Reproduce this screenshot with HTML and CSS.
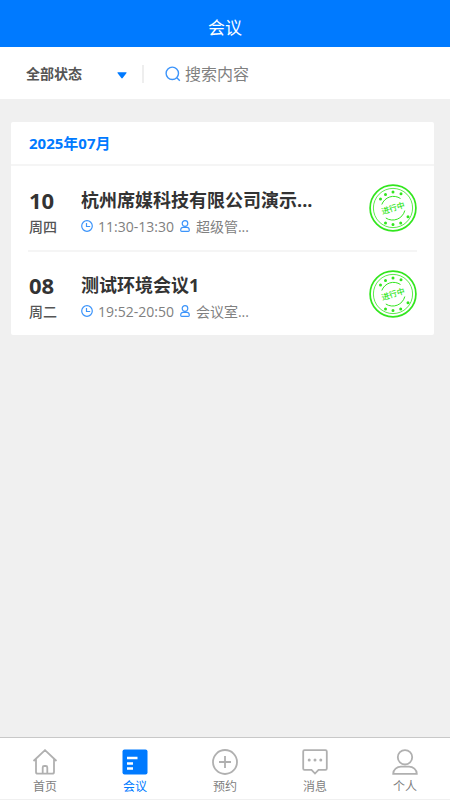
FILE: index.html
```html
<!DOCTYPE html>
<html lang="zh-CN">
<head>
    <meta charset="UTF-8">
    <meta name="viewport" content="width=device-width, initial-scale=1.0">
    <title>会议</title>
    <link rel="stylesheet" href="styles.css">
</head>
<body>
    <!-- shared icons -->
    <svg class="sprite" aria-hidden="true">
        <symbol id="clock" viewBox="0 0 12 12">
            <circle cx="6" cy="6" r="5.3"/>
            <path d="M5.500 3v3.500h3.700"/>
        </symbol>
        <symbol id="person" viewBox="0 0 12 12">
            <circle cx="6" cy="3.500" r="2.800"/>
            <path d="M4 7.300C2.500 7.300 1.700 8.500 1.700 10.200Q1.700 11.300 2.700 11.300H9.300Q10.300 11.300 10.300 10.200C10.300 8.500 9.500 7.300 8 7.300z"/>
        </symbol>
        <symbol id="stamp" viewBox="0 0 48 48">
            <circle cx="24" cy="24" r="22.900" stroke-width="1.700"/>
            <circle cx="24" cy="24" r="19.600" stroke-width="0.800"/>
            <path d="M12.800 20.500A12.500 12.500 0 0 1 31.500 14.500M35.800 26.500A12.500 12.500 0 0 1 16.800 34" stroke-width="1"/>
            <path class="dots" d="M11.500 15h0M16.500 10.500h0M24 8h0M32 9.700h0M16.500 39h0M24 40.500h0M31.700 39h0M39 32.800h0"/>
        </symbol>
    </svg>

    <header class="header">
        <h1>会议</h1>
    </header>

    <form class="filter">
        <div class="status">
            <select aria-label="会议状态">
                <option>全部状态</option>
            </select>
            <svg class="arrow" viewBox="0 0 10 7"><path d="M1 .3h8q1 0 .5.8L5.700 6q-.7.800-1.400 0L.5 1.100Q0 .3 1 .3z"/></svg>
        </div>
        <label class="search">
            <svg class="search-icon" viewBox="0 0 16 16"><circle cx="7.300" cy="7.300" r="6.200"/><path d="M11.800 11.800l3 3"/></svg>
            <input type="text" placeholder="搜索内容" aria-label="搜索内容">
        </label>
    </form>

    <main class="card">
        <h2 class="month">2025年07月</h2>
        <ul class="meetings">
            <li class="meeting">
                <div class="date">
                    <strong>10</strong>
                    <span>周四</span>
                </div>
                <div class="info">
                    <h3>杭州席媒科技有限公司演示...</h3>
                    <p>
                        <svg class="icon"><use href="#clock"/></svg>
                        <span>11:30-13:30</span>
                        <svg class="icon"><use href="#person"/></svg>
                        <span>超级管...</span>
                    </p>
                </div>
                <div class="stamp">
                    <svg><use href="#stamp"/></svg>
                    <span>进行中</span>
                </div>
            </li>
            <li class="meeting">
                <div class="date">
                    <strong>08</strong>
                    <span>周二</span>
                </div>
                <div class="info">
                    <h3>测试环境会议1</h3>
                    <p>
                        <svg class="icon"><use href="#clock"/></svg>
                        <span>19:52-20:50</span>
                        <svg class="icon"><use href="#person"/></svg>
                        <span>会议室...</span>
                    </p>
                </div>
                <div class="stamp">
                    <svg><use href="#stamp"/></svg>
                    <span>进行中</span>
                </div>
            </li>
        </ul>
    </main>

    <nav class="tabs">
        <a href="#">
            <svg viewBox="0 0 26 26"><path d="M1.500 12L13 1.200 24.500 12M4 10v13q0 1.700 1.700 1.700h14.600q1.700 0 1.700-1.700V10M10.700 24.500v-6q0-1.500 1.500-1.500h1.600q1.500 0 1.500 1.500v6"/></svg>
            <span>首页</span>
        </a>
        <a href="#" class="active">
            <svg viewBox="0 0 26 26"><rect x="0.500" y="0.500" width="25" height="25" rx="2"/><path d="M5 9h10.500M5 14.500h6M5 19.500h6"/></svg>
            <span>会议</span>
        </a>
        <a href="#">
            <svg viewBox="0 0 26 26"><circle cx="13" cy="13" r="12"/><path d="M13 7v12M7 13h12"/></svg>
            <span>预约</span>
        </a>
        <a href="#">
            <svg viewBox="0 0 26 26"><path d="M2.500 1.200h21q1.300 0 1.300 1.300v17q0 1.300-1.300 1.300h-7L13 24.500l-3.500-3.700h-7q-1.300 0-1.300-1.300v-17q0-1.300 1.300-1.300z"/><path class="dots" d="M7.200 11h0M13 11h0M18.800 11h0"/></svg>
            <span>消息</span>
        </a>
        <a href="#">
            <svg viewBox="0 0 26 26"><circle cx="13" cy="8.300" r="7.200"/><path d="M1.200 24.800C1.200 20.500 5 17.600 9 17.600h8c4 0 7.800 2.900 7.800 7.200z"/></svg>
            <span>个人</span>
        </a>
    </nav>
</body>
</html>
```
FILE: styles.css
```css
* {
    box-sizing: border-box;
}
body {
    display: flex;
    flex-direction: column;
    min-height: 100vh;
    margin: 0;
    background: #f0f0f0;
    color: #333;
    font-family: "Open Sans", "Noto Sans CJK SC", sans-serif;
}
h1, h2, h3, p, ul {
    margin: 0;
    padding: 0;
}
svg {
    display: block;
    fill: none;
}
.sprite {
    position: absolute;
    width: 0;
    height: 0;
}
.header {
    padding: 16px 0 7px;
    background: #007aff;
    color: #fff;
    text-align: center;
}
.header h1 {
    font-size: 17px;
    font-weight: 400;
    line-height: 24px;
}
.filter {
    display: flex;
    align-items: center;
    padding: 15px 16px 13px 26px;
    background: #fff;
}
.status {
    display: flex;
    align-items: center;
    width: 118px;
    height: 18px;
    padding-right: 15px;
    border-right: 2px solid #eee;
}
.status select {
    flex: 1;
    min-width: 0;
    padding: 0;
    border: none;
    background: none;
    color: #555;
    font: bold 14px/20px "Open Sans", "Noto Sans CJK SC", sans-serif;
    appearance: none;
}
.arrow {
    width: 10px;
    height: 7px;
    margin-top: 2px;
    fill: #007aff;
}
.search {
    display: flex;
    flex: 1;
    align-items: center;
    gap: 4px;
    padding-left: 21px;
}
.search-icon {
    width: 16px;
    height: 16px;
    stroke: #3c94fa;
    stroke-width: 1.4;
}
.search input {
    flex: 1;
    min-width: 0;
    padding: 0;
    border: none;
    outline: none;
    background: none;
    font: 16px/24px "Open Sans", "Noto Sans CJK SC", sans-serif;
}
.search input::placeholder {
    color: #808080;
}
.card {
    margin: 23px 16px 0 11px;
    border-radius: 2px;
    background: #fff;
}
.month {
    padding: 10px 18px 9px;
    border-bottom: 2px solid #f5f5f5;
    color: #007aff;
    font-size: 15px;
    line-height: 23px;
}
.meetings {
    padding: 0 17px;
    list-style: none;
}
.meeting {
    display: flex;
    align-items: center;
    height: 84px;
}
.meeting + .meeting {
    height: 85px;
    border-top: 2px solid #f5f5f5;
}
.date {
    display: flex;
    flex-direction: column;
    width: 53px;
    padding: 9px 0 0 1px;
}
.date strong {
    font-size: 22px;
    line-height: 28px;
}
.date span {
    color: #555;
    font-size: 14px;
    font-weight: 500;
    line-height: 26px;
}
.info {
    flex: 1;
    min-width: 0;
    padding-top: 9px;
}
.info h3 {
    overflow: hidden;
    font-size: 18px;
    line-height: 28px;
    text-overflow: ellipsis;
    white-space: nowrap;
}
.info p {
    display: flex;
    align-items: center;
    gap: 5px;
    color: #808080;
    font-size: 14px;
    line-height: 26px;
}
.icon {
    width: 12px;
    height: 12px;
    margin-bottom: 2px;
    stroke: #3c94fa;
    stroke-width: 1.2;
}
.stamp {
    display: grid;
    place-items: center;
    width: 48px;
    height: 48px;
    color: #32e61e;
}
.stamp > * {
    grid-area: 1 / 1;
}
.stamp svg {
    width: 48px;
    height: 48px;
    stroke: currentColor;
}
.stamp span {
    font-size: 8px;
    font-weight: 500;
    line-height: 12px;
    transform: rotate(-17deg);
}
.dots {
    stroke-linecap: round;
    stroke-width: 3;
}
.tabs {
    display: flex;
    margin-top: auto;
    border-top: 1px solid #c8c8c8;
    border-bottom: 1px solid #f0f0f0;
    background: #fff;
}
.tabs a {
    display: flex;
    flex: 1;
    flex-direction: column;
    align-items: center;
    gap: 2px;
    padding: 11px 0 2px;
    color: #808080;
    font-size: 12px;
    line-height: 20px;
    text-decoration: none;
}
.tabs svg {
    width: 26px;
    height: 26px;
    stroke: #b0b0b0;
    stroke-width: 1.8;
}
.tabs .active {
    color: #007aff;
}
.active rect {
    fill: #007aff;
    stroke: none;
}
.active path {
    stroke: #fff;
    stroke-width: 2.5;
}
```
